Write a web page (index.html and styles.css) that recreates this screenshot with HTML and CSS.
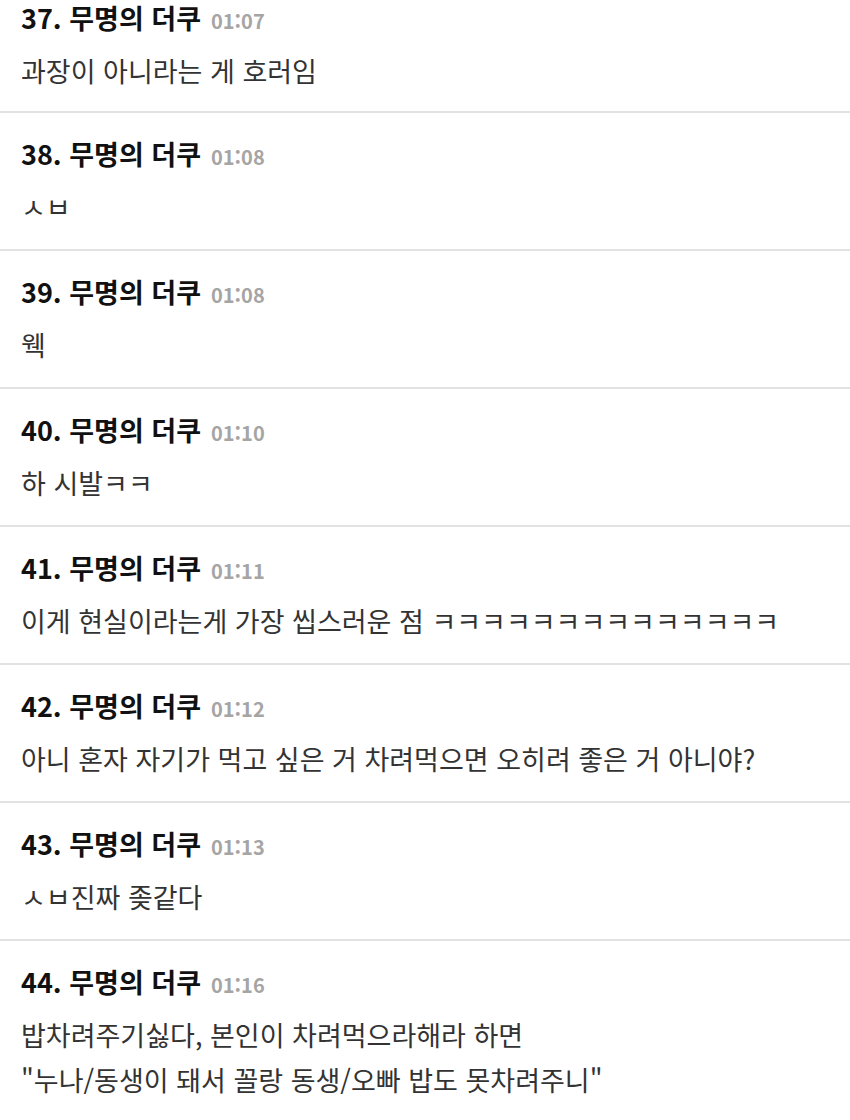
FILE: index.html
```html
<!DOCTYPE html>
<html lang="ko">
<head>
  <meta charset="UTF-8" />
  <meta name="viewport" content="width=device-width, initial-scale=1.0"/>
  <title>댓글</title>
  <link rel="stylesheet" href="styles.css">
</head>
<body>
  <div class="comments">
    <div class="comment">
      <div class="head"><span class="name">37. 무명의 더쿠</span><span class="time">01:07</span></div>
      <div class="text">과장이 아니라는 게 호러임</div>
    </div>
    <div class="comment">
      <div class="head"><span class="name">38. 무명의 더쿠</span><span class="time">01:08</span></div>
      <div class="text">ㅅㅂ</div>
    </div>
    <div class="comment">
      <div class="head"><span class="name">39. 무명의 더쿠</span><span class="time">01:08</span></div>
      <div class="text">웩</div>
    </div>
    <div class="comment">
      <div class="head"><span class="name">40. 무명의 더쿠</span><span class="time">01:10</span></div>
      <div class="text">하 시발ㅋㅋ</div>
    </div>
    <div class="comment">
      <div class="head"><span class="name">41. 무명의 더쿠</span><span class="time">01:11</span></div>
      <div class="text">이게 현실이라는게 가장 씹스러운 점 ㅋㅋㅋㅋㅋㅋㅋㅋㅋㅋㅋㅋㅋㅋ</div>
    </div>
    <div class="comment">
      <div class="head"><span class="name">42. 무명의 더쿠</span><span class="time">01:12</span></div>
      <div class="text">아니 혼자 자기가 먹고 싶은 거 차려먹으면 오히려 좋은 거 아니야?</div>
    </div>
    <div class="comment">
      <div class="head"><span class="name">43. 무명의 더쿠</span><span class="time">01:13</span></div>
      <div class="text">ㅅㅂ진짜 좆같다</div>
    </div>
    <div class="comment">
      <div class="head"><span class="name">44. 무명의 더쿠</span><span class="time">01:16</span></div>
      <div class="text">밥차려주기싫다, 본인이 차려먹으라해라 하면<br>"누나/동생이 돼서 꼴랑 동생/오빠 밥도 못차려주니"</div>
    </div>
  </div>
</body>
</html>
```

FILE: styles.css
```css
body {
  margin: 0;
  background-color: #fff;
  font-family: "Noto Sans CJK KR", "Noto Sans", sans-serif;
  color: #333;
}

.comment {
  padding: 23px 21px 20px;
  border-bottom: 2px solid #e2e2e2;
}

.comment:first-child {
  padding-top: 0;
  padding-bottom: 18px;
}

.head {
  line-height: 36px;
  height: 36px;
}

.name {
  font-size: 27px;
  font-weight: bold;
  color: #111;
}

.time {
  margin-left: 10px;
  font-size: 20px;
  font-weight: bold;
  color: #a5a5a5;
}

.text {
  margin-top: 12px;
  font-size: 27px;
  line-height: 45px;
}
```
